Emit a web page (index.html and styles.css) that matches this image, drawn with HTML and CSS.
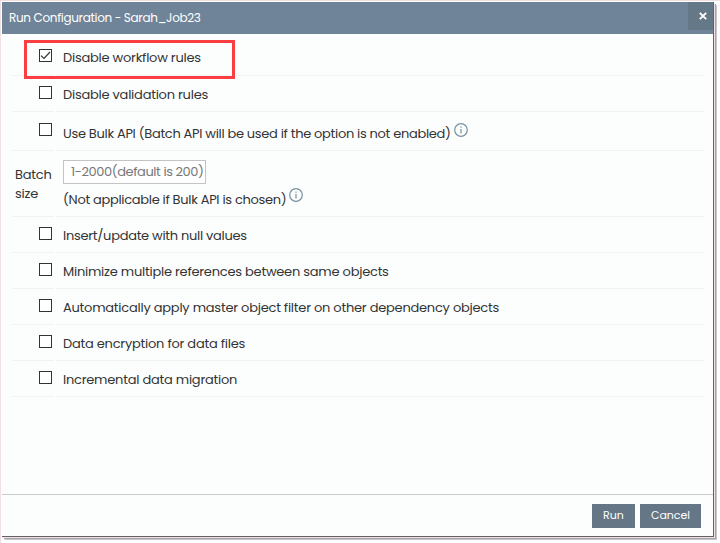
FILE: index.html
```html
<!DOCTYPE html>
<html lang="en">
<head>
<meta charset="utf-8">
<title>Run Configuration</title>
<link rel="stylesheet" href="styles.css">
</head>
<body>
<div class="dialog">
  <header class="header">
    <h1 class="title">Run Configuration - Sarah_Job23</h1>
    <button class="close" aria-label="Close"><svg width="8" height="8" viewBox="0 0 8 8"><path d="M.8 .8L7.2 7.2M7.2 .8L.8 7.2" stroke="#fff" stroke-width="1.9"/></svg></button>
  </header>
  <main class="options">
    <div class="row first">
      <div class="cell check"><span class="box"><svg width="11" height="11" viewBox="0 0 11 11"><path d="M1 5.6L4 8.5L10 2" fill="none" stroke="#333" stroke-width="1.2"/></svg></span></div>
      <div class="cell label"><span>Disable workflow rules</span></div>
      <div class="highlight"></div>
    </div>
    <div class="row">
      <div class="cell check"><span class="box"></span></div>
      <div class="cell label"><span>Disable validation rules</span></div>
    </div>
    <div class="row bulk">
      <div class="cell check"><span class="box"></span></div>
      <div class="cell label"><span class="tight">Use Bulk API (Batch API will be used if the option is not enabled)</span><svg class="info" width="14" height="14" viewBox="0 0 14 14"><circle cx="7" cy="7" r="6.3"/><path d="M7 6V10.5M7 3.4V4.8"/></svg></div>
    </div>
    <div class="row batch">
      <div class="cell side">Batch<br>size</div>
      <div class="cell field">
        <div class="input">1-2000(default is 200)</div>
        <div class="note"><span class="tight">(Not applicable if Bulk API is chosen)</span><svg class="info" width="14" height="14" viewBox="0 0 14 14"><circle cx="7" cy="7" r="6.3"/><path d="M7 6V10.5M7 3.4V4.8"/></svg></div>
      </div>
    </div>
    <div class="row">
      <div class="cell check"><span class="box"></span></div>
      <div class="cell label"><span class="snug">Insert/update with null values</span></div>
    </div>
    <div class="row">
      <div class="cell check"><span class="box"></span></div>
      <div class="cell label"><span>Minimize multiple references between same objects</span></div>
    </div>
    <div class="row">
      <div class="cell check"><span class="box"></span></div>
      <div class="cell label"><span>Automatically apply master object filter on other dependency objects</span></div>
    </div>
    <div class="row">
      <div class="cell check"><span class="box"></span></div>
      <div class="cell label"><span>Data encryption for data files</span></div>
    </div>
    <div class="row">
      <div class="cell check"><span class="box"></span></div>
      <div class="cell label"><span>Incremental data migration</span></div>
    </div>
  </main>
  <footer class="footer">
    <button class="btn run">Run</button>
    <button class="btn cancel">Cancel</button>
  </footer>
</div>
</body>
</html>
```
FILE: styles.css
```css
* { box-sizing: border-box; }
body {
  margin: 0;
  height: 543px;
  padding: 2px 0 0 2px;
  overflow: hidden;
  background: #fff;
  box-shadow: inset 1px 0 #efdfe0, inset 0 1px #efdfe0;
  font: 13px/19px Poppins, Inter, sans-serif;
  letter-spacing: -0.24px;
  color: #333;
}
.dialog {
  width: 712px;
  height: 535px;
  display: flex;
  flex-direction: column;
  background: #fcfefe;
  border-right: 1px solid #666067;
  border-bottom: 1px solid #666067;
  box-shadow: 1px 1px #eee0e4, 2px 2px #aaa4a8, 3px 3px #c8c4c8;
}
.header {
  height: 32px;
  display: flex;
  justify-content: space-between;
  background: #6f8498;
  color: #fff;
}
.title {
  margin: 0;
  padding-left: 7px;
  font-size: 12px;
  font-weight: 400;
  line-height: 32px;
  letter-spacing: -0.33px;
}
.close {
  width: 25px;
  height: 28px;
  padding: 0 0 0 4px;
  border: 0;
  background: #657887;
  display: flex;
  align-items: center;
  justify-content: center;
}
.options { flex: 1; padding: 6px 9px 0 10px; }
.row {
  display: grid;
  grid-template-columns: 42px 1fr;
  gap: 2px;
  height: 36px;
  position: relative;
}
.cell { border-bottom: 1px solid #f0f3f3; white-space: nowrap; }
.check { padding: 10px 0 0 27px; }
.box {
  display: block;
  width: 13px;
  height: 13px;
  border: 1px solid #333;
  background: #fff;
}
.box svg { display: block; }
.label { padding: 9px 0 0 7px; }
.tight { letter-spacing: -0.31px; }
.snug { letter-spacing: -0.29px; }
.first .check { padding-top: 9px; }
.first .label { padding-top: 8px; }
.bulk { height: 39px; }
.bulk .check, .bulk .label { padding-top: 11px; }
.batch { height: 66px; }
.side { padding: 14px 0 0 3px; }
.field { padding: 9px 0 0 7px; }
.input {
  width: 143px;
  height: 24px;
  border: 1px solid #c4c4c4;
  background: #fff;
  padding-left: 7px;
  line-height: 22px;
  letter-spacing: -0.43px;
  color: #777;
}
.note { margin-top: 4px; }
.info {
  margin-left: 3px;
  vertical-align: 1px;
  fill: none;
  stroke: #78909f;
  stroke-width: 1.2;
}
.note .info { vertical-align: 2px; }
.highlight {
  position: absolute;
  left: 12px;
  top: 0;
  width: 211px;
  height: 39px;
  border: 3px solid #fb3e41;
  z-index: 1;
}
.footer {
  height: 42px;
  border-top: 1px solid #c9cbcc;
  padding: 9px 12px 0 0;
  display: flex;
  justify-content: flex-end;
  gap: 5px;
}
.btn {
  height: 24px;
  padding: 0 0 2px;
  border: 0;
  background: #657786;
  color: #fff;
  font: 11px/22px Poppins, Inter, sans-serif;
}
.run { width: 43px; }
.cancel { width: 61px; }
```
